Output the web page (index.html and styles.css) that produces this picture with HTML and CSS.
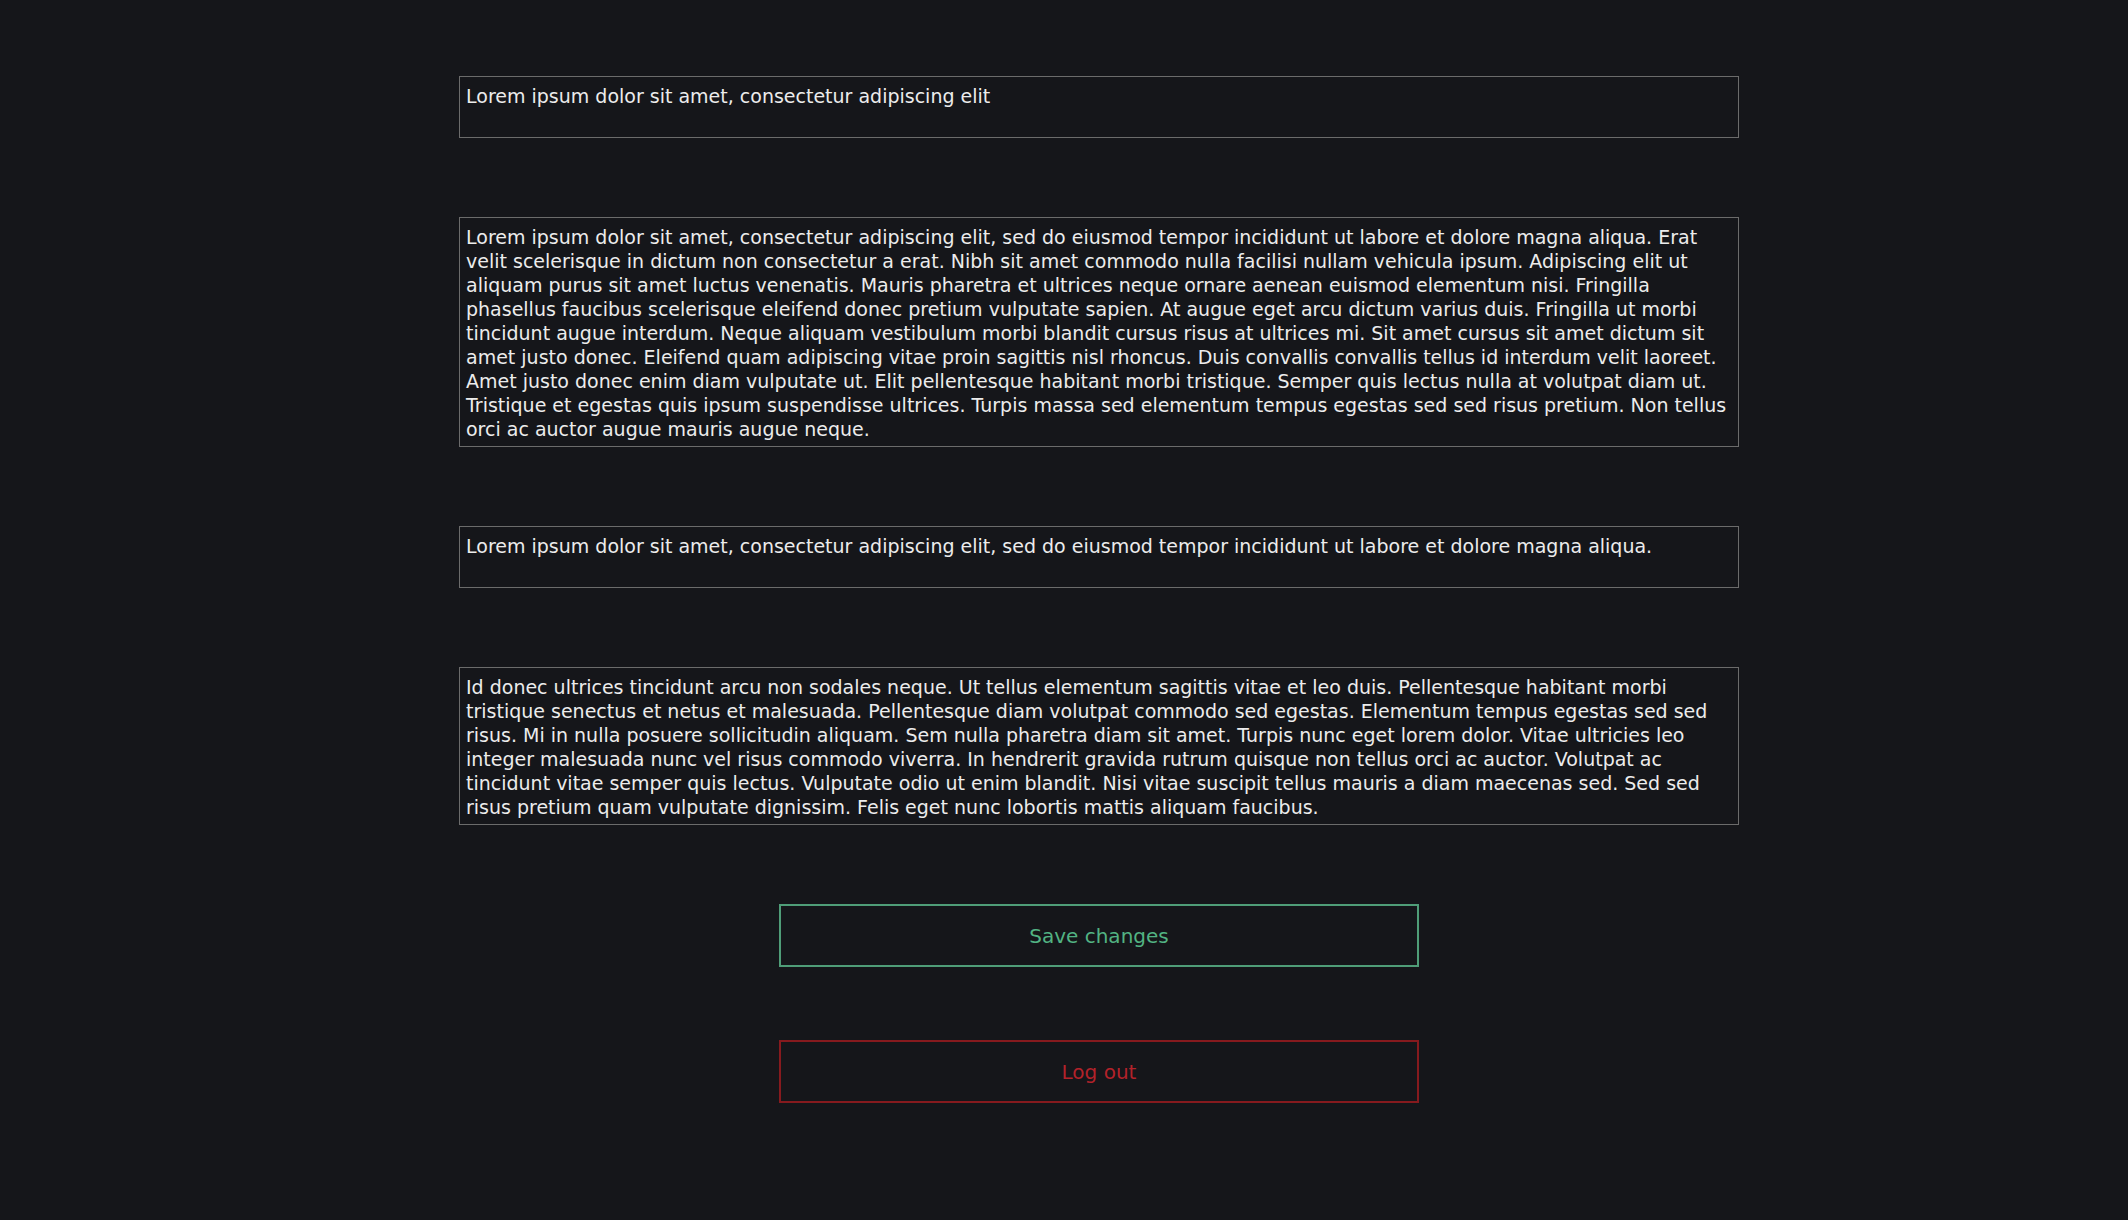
FILE: index.html
```html
<!DOCTYPE html>
<html lang="en">
<head>
<meta charset="utf-8">
<title>Settings</title>
<link rel="stylesheet" href="styles.css">
</head>
<body>
<main class="form">
  <textarea class="field rows-2" rows="2">Lorem ipsum dolor sit amet, consectetur adipiscing elit</textarea>
  <textarea class="field rows-9" rows="9">Lorem ipsum dolor sit amet, consectetur adipiscing elit, sed do eiusmod tempor incididunt ut labore et dolore magna aliqua. Erat velit scelerisque in dictum non consectetur a erat. Nibh sit amet commodo nulla facilisi nullam vehicula ipsum. Adipiscing elit ut aliquam purus sit amet luctus venenatis. Mauris pharetra et ultrices neque ornare aenean euismod elementum nisi. Fringilla phasellus faucibus scelerisque eleifend donec pretium vulputate sapien. At augue eget arcu dictum varius duis. Fringilla ut morbi tincidunt augue interdum. Neque aliquam vestibulum morbi blandit cursus risus at ultrices mi. Sit amet cursus sit amet dictum sit amet justo donec. Eleifend quam adipiscing vitae proin sagittis nisl rhoncus. Duis convallis convallis tellus id interdum velit laoreet. Amet justo donec enim diam vulputate ut. Elit pellentesque habitant morbi tristique. Semper quis lectus nulla at volutpat diam ut. Tristique et egestas quis ipsum suspendisse ultrices. Turpis massa sed elementum tempus egestas sed sed risus pretium. Non tellus orci ac auctor augue mauris augue neque.</textarea>
  <textarea class="field rows-2" rows="2">Lorem ipsum dolor sit amet, consectetur adipiscing elit, sed do eiusmod tempor incididunt ut labore et dolore magna aliqua.</textarea>
  <textarea class="field rows-6" rows="6">Id donec ultrices tincidunt arcu non sodales neque. Ut tellus elementum sagittis vitae et leo duis. Pellentesque habitant morbi tristique senectus et netus et malesuada. Pellentesque diam volutpat commodo sed egestas. Elementum tempus egestas sed sed risus. Mi in nulla posuere sollicitudin aliquam. Sem nulla pharetra diam sit amet. Turpis nunc eget lorem dolor. Vitae ultricies leo integer malesuada nunc vel risus commodo viverra. In hendrerit gravida rutrum quisque non tellus orci ac auctor. Volutpat ac tincidunt vitae semper quis lectus. Vulputate odio ut enim blandit. Nisi vitae suscipit tellus mauris a diam maecenas sed. Sed sed risus pretium quam vulputate dignissim. Felis eget nunc lobortis mattis aliquam faucibus.</textarea>
  <button class="btn btn-save" type="button">Save changes</button>
  <button class="btn btn-logout" type="button">Log out</button>
</main>
</body>
</html>
```
FILE: styles.css
```css
html, body {
  margin: 0;
  padding: 0;
  background: #15161a;
}

body {
  font-family: "DejaVu Sans", "Liberation Sans", sans-serif;
  color: #e8e8e8;
}

.form {
  width: 1280px;
  margin-left: 459px;
  padding-top: 76px;
  display: flex;
  flex-direction: column;
}

.field {
  display: block;
  box-sizing: border-box;
  width: 1280px;
  margin: 0 0 79px 0;
  padding: 7px 6px 5px 6px;
  background: #15161a;
  color: #ececec;
  border: 1px solid #6b6b6b;
  border-radius: 0;
  font-family: "DejaVu Sans", "Liberation Sans", sans-serif;
  font-size: 19px;
  line-height: 24px;
  overflow: hidden;
  resize: none;
  outline: none;
}

.rows-2 { height: 62px; }
.rows-6 { height: 158px; }
.rows-9 { height: 230px; }

.btn {
  display: block;
  box-sizing: border-box;
  width: 640px;
  height: 63px;
  margin: 0 auto;
  padding: 0;
  background: transparent;
  border: 2px solid;
  border-radius: 0;
  font-family: "DejaVu Sans", "Liberation Sans", sans-serif;
  font-size: 20px;
  font-weight: normal;
  cursor: pointer;
}

.btn-save {
  border-color: #4f9d78;
  color: #52b383;
}

.btn-logout {
  margin-top: 73px;
  border-color: #861a1e;
  color: #b3222a;
}
```
